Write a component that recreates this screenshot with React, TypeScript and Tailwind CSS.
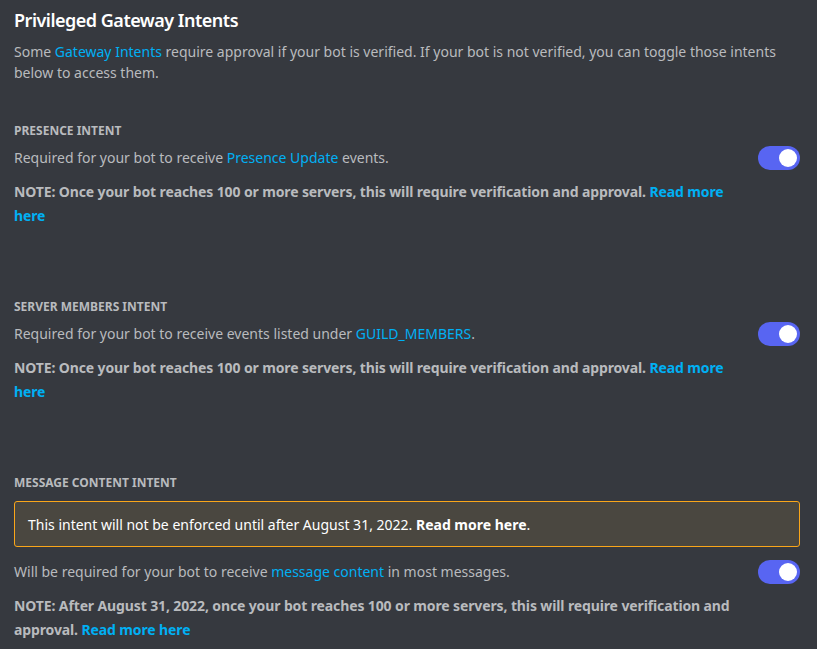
import React from "react";

const Toggle = () => (
  <div className="w-[42px] h-[24px] rounded-full bg-[#5865f2] flex items-center justify-end pr-[3px] shrink-0">
    <div className="w-[18px] h-[18px] rounded-full bg-white" />
  </div>
);

const Link = ({ children }: { children: React.ReactNode }) => (
  <span className="text-[#00b0f4]">{children}</span>
);

const Section = ({
  title,
  desc,
  note,
  warning,
}: {
  title: string;
  desc: React.ReactNode;
  note: React.ReactNode;
  warning?: React.ReactNode;
}) => (
  <div className="flex flex-col pr-[17px]">
    <div className="text-[12px] leading-[16px] font-bold text-[#b9bbbe] uppercase">{title}</div>
    {warning ? (
      <div className="mt-[10px] border border-[#faa61a] rounded-[3px] bg-[#4a4740] px-[13px] h-[46px] flex items-center text-[14px] text-white">
        {warning}
      </div>
    ) : null}
    <div className={"flex items-center gap-[18px] " + (warning ? "mt-[13px]" : "mt-[7px]")}>
      <div className="flex-1 text-[14px] leading-[20px] text-[#b9bbbe]">{desc}</div>
      <Toggle />
    </div>
    <div className="mt-[10px] w-[730px] text-[14px] leading-[24px] font-bold tracking-[-0.12px] text-[#b9bbbe]">
      {note}
    </div>
  </div>
);

export default function App() {
  return (
    <div
      className="w-[817px] h-[649px] bg-[#36393f] overflow-hidden pl-[14px] pt-[8px]"
      style={{ fontFamily: '"Noto Sans", "Open Sans", sans-serif' }}
    >
      <h1 className="text-[18px] leading-[24px] font-semibold tracking-[-0.5px] text-white">Privileged Gateway Intents</h1>
      <p className="mt-[9px] pr-[30px] text-[14px] leading-[21px] text-[#b9bbbe]">
        Some <Link>Gateway Intents</Link> require approval if your bot is verified. If your bot is not verified, you can toggle those intents below to access them.
      </p>
      <div className="mt-[40px] flex flex-col gap-[71px]">
        <Section
          title="Presence Intent"
          desc={
            <>
              Required for your bot to receive <Link>Presence Update</Link> events.
            </>
          }
          note={
            <>
              NOTE: Once your bot reaches 100 or more servers, this will require verification and approval. <Link>Read more here</Link>
            </>
          }
        />
        <Section
          title="Server Members Intent"
          desc={
            <>
              Required for your bot to receive events listed under <Link>GUILD_MEMBERS</Link>.
            </>
          }
          note={
            <>
              NOTE: Once your bot reaches 100 or more servers, this will require verification and approval. <Link>Read more here</Link>
            </>
          }
        />
        <Section
          title="Message Content Intent"
          warning={
            <span>
              This intent will not be enforced until after August 31, 2022. <span className="font-bold">Read more here</span>.
            </span>
          }
          desc={
            <>
              Will be required for your bot to receive <Link>message content</Link> in most messages.
            </>
          }
          note={
            <>
              NOTE: After August 31, 2022, once your bot reaches 100 or more servers, this will require verification and approval. <Link>Read more here</Link>
            </>
          }
        />
      </div>
    </div>
  );
}
